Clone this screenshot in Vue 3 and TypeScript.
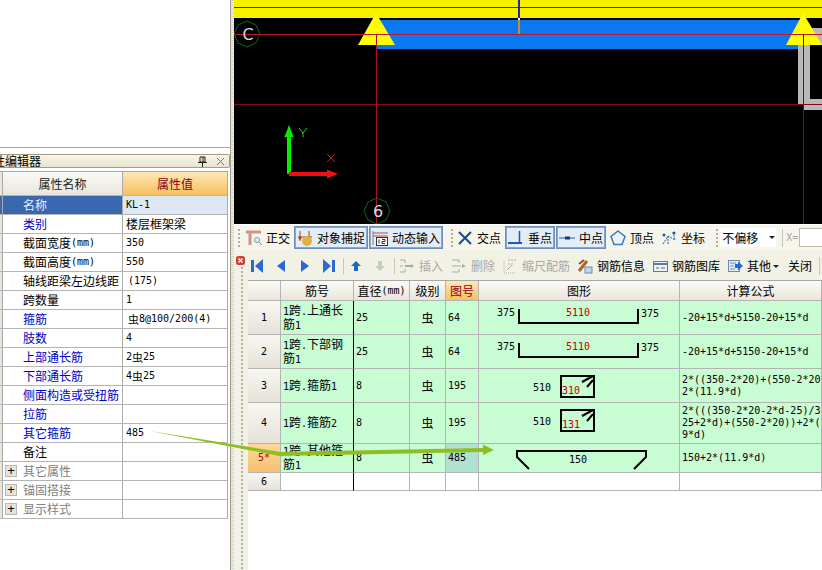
<script setup lang="ts">
interface Run { t: string; latin: boolean }
const runs = (s: string): Run[] =>
  (s.match(/[\x00-\x7f]+|[^\x00-\x7f]+/g) ?? []).map((t) => ({ t, latin: t.charCodeAt(0) < 128 }))

const props = [
  { name: '名称', value: 'KL-1', tone: 'sel', inset: false },
  { name: '类别', value: '楼层框架梁', tone: 'blue', inset: false },
  { name: '截面宽度(mm)', value: '350', tone: '', inset: false },
  { name: '截面高度(mm)', value: '550', tone: '', inset: false },
  { name: '轴线距梁左边线距', value: '(175)', tone: '', inset: true },
  { name: '跨数量', value: '1', tone: '', inset: false },
  { name: '箍筋', value: '虫8@100/200(4)', tone: 'blue', inset: true },
  { name: '肢数', value: '4', tone: 'blue', inset: false },
  { name: '上部通长筋', value: '2虫25', tone: 'blue', inset: false },
  { name: '下部通长筋', value: '4虫25', tone: 'blue', inset: false },
  { name: '侧面构造或受扭筋', value: '', tone: 'blue', inset: false },
  { name: '拉筋', value: '', tone: 'blue', inset: false },
  { name: '其它箍筋', value: '485', tone: 'blue', inset: false },
  { name: '备注', value: '', tone: '', inset: false },
  { name: '其它属性', value: '', tone: 'group', inset: false },
  { name: '锚固搭接', value: '', tone: 'group', inset: false },
  { name: '显示样式', value: '', tone: 'group', inset: false },
]

const icons: Record<string, string> = {
  ortho: '<path d="M0 2h15M4 2v13" stroke="#d09488" stroke-width="3" fill="none"/><circle cx="11" cy="10" r="2.500" fill="#e8f0f4" stroke="#7a9ab0"/><path d="M13 12l3 3" stroke="#7a9ab0"/>',
  snap: '<path d="M3 1v10M12 1v10M1 7h14" stroke="#8a4a30" fill="none"/><circle cx="10" cy="11" r="5" fill="#e0b040"/><circle cx="3" cy="8" r="1.500" fill="#c03020"/>',
  dyn: '<path d="M1 3h15M1 6h15" stroke="#b05040"/><path d="M1 1v14" stroke="#708090"/><rect x="4.500" y="7.500" width="11" height="8" fill="#fff" stroke="#333"/><path d="M7 9.500v4M10 9.500h3v2h-3v2h3" stroke="#333" fill="none"/>',
  cross: '<path d="M2 2l12 12M14 2L2 14" stroke="#1a4a80" stroke-width="2"/>',
  perp: '<path d="M11.500 1v12" stroke="#1a5ab0" stroke-width="1.500"/><path d="M-2 13h16" stroke="#1a5ab0" stroke-width="2"/>',
  mid: '<path d="M0 8h16" stroke="#1a5ab0"/><rect x="6" y="6.500" width="5" height="3" fill="#123a80"/>',
  vertex: '<path d="M8 1l7 5.500-3 8H4l-3-8z" fill="#eaf2fa" stroke="#3a78c0" stroke-width="1.500"/>',
  coord: '<path d="M2 14l5-8 7 4-2-8M7 6v9" stroke="#1a5a90" fill="none" stroke-dasharray="2 1"/><circle cx="3" cy="5" r="1.500" fill="#1a5a90"/><circle cx="13" cy="3" r="1.500" fill="#1a5a90"/>',
  first: '<path d="M2 2h3v12H2z" fill="#2a6ad0"/><path d="M14 1L6 8l8 7z" fill="#2a6ad0"/>',
  prev: '<path d="M12 2L4 8l8 6z" fill="#2a6ad0"/>',
  next: '<path d="M4 2l8 6-8 6z" fill="#2a6ad0"/>',
  last: '<path d="M11 2h3v12h-3z" fill="#2a6ad0"/><path d="M2 1l8 7-8 7z" fill="#2a6ad0"/>',
  up: '<path d="M8 3l5 5h-3v5H6V8H3z" fill="#1a6ac0"/>',
  down: '<path d="M6 3h4v5h3l-5 5-5-5h3z" fill="#c8c8c4"/>',
  ins: '<path d="M1 2h5M1 8h3M1 14h5M6 2v3M6 11v3" stroke="#aaa" fill="none"/><path d="M6 8h8" stroke="#aaa" stroke-width="2"/><path d="M12 6l3 2-3 2z" fill="#aaa"/>',
  del: '<path d="M1 2h7v3M1 14h7v-3M1 8h9" stroke="#aaa" fill="none"/><path d="M11 6l4 2-4 2z" fill="#aaa"/>',
  scale: '<path d="M2 3v12h12" stroke="#b0b0b0" stroke-dasharray="1 1" fill="none"/><path d="M6 2h8M6 6h5" stroke="#b0b0b0" stroke-dasharray="2 1"/><path d="M5 12l5-5" stroke="#b0b0b0"/>',
  info: '<path d="M2 13L10 3" stroke="#a06a30" stroke-width="3"/><rect x="8" y="9" width="7" height="6" fill="#c0d4ea" stroke="#7088a8"/><path d="M2 6l5-4" stroke="#b04030" stroke-width="2"/>',
  lib: '<rect x="1.500" y="3.500" width="14" height="10" fill="#eaf0f8" stroke="#5a7aa8"/><path d="M2 6h13" stroke="#5a7aa8" stroke-width="2"/><path d="M4 10h3M9 10h4" stroke="#806040"/>',
  other: '<rect x="1.500" y="2.500" width="11" height="11" fill="#e4eef8" stroke="#6a8ab0"/><path d="M3 5h6M3 8h4M3 11h5" stroke="#7a8a9a"/><path d="M8 6h3V3.500L16 8l-5 4.500V10H8z" fill="#2a6ad0"/>',
}

const snapTools = [
  { label: '正交', icon: 'ortho', on: false },
  { label: '对象捕捉', icon: 'snap', on: true },
  { label: '动态输入', icon: 'dyn', on: true },
]
const pointTools = [
  { label: '交点', icon: 'cross', on: false },
  { label: '垂点', icon: 'perp', on: true },
  { label: '中点', icon: 'mid', on: true },
  { label: '顶点', icon: 'vertex', on: false },
  { label: '坐标', icon: 'coord', on: false },
]
const navIcons = ['first', 'prev', 'next', 'last']
const editTools = [
  { label: '缩尺配筋', icon: 'scale', off: true },
  { label: '钢筋信息', icon: 'info', off: false },
  { label: '钢筋图库', icon: 'lib', off: false },
  { label: '其他', icon: 'other', off: false },
]

const heads = ['', '筋号', '直径(mm)', '级别', '图号', '图形', '计算公式']
const rows = [
  { no: '1', name: '1跨.上通长筋1', dia: '25', code: '64', h: 34, top: 301, formula: ['-20+15*d+5150-20+15*d'] },
  { no: '2', name: '1跨.下部钢筋1', dia: '25', code: '64', h: 34, top: 335, formula: ['-20+15*d+5150-20+15*d'] },
  { no: '3', name: '1跨.箍筋1', dia: '8', code: '195', h: 34, top: 369, formula: ['2*((350-2*20)+(550-2*20))+', '2*(11.9*d)'] },
  { no: '4', name: '1跨.箍筋2', dia: '8', code: '195', h: 41, top: 403, formula: ['2*(((350-2*20-2*d-25)/3*', '25+2*d)+(550-2*20))+2*(1', '9*d)'] },
  { no: '5*', name: '1跨.其他箍筋1', dia: '8', code: '485', h: 29, top: 444, formula: ['150+2*(11.9*d)'] },
]
</script>

<template>
  <div class="page">
    <aside class="left">
      <div class="left-top"></div>
      <div class="title">
        <span class="title-text">属性编辑器</span>
        <svg class="pin" width="9" height="11" viewBox="0 0 9 11"><path d="M2 1h5v5H2zM0 6.500h9M4.500 7v4M5 1v5" stroke="#222" fill="none"/></svg>
        <svg class="title-x" width="9" height="9" viewBox="0 0 9 9"><path d="M1 1l7 7M8 1L1 8" stroke="#777" fill="none"/></svg>
      </div>
      <div class="pgrid">
        <div class="stub"></div>
        <div class="pcell phead">属性名称</div>
        <div class="pcell phead active">属性值</div>
        <template v-for="p in props" :key="p.name">
          <div class="stub" :class="{ stubsel: p.tone === 'sel' }"></div>
          <div class="pcell pname" :class="p.tone">
            <span v-if="p.tone === 'group'" class="plus">+</span>
            <span v-for="(r, i) in runs(p.name)" :key="i" :class="{ lat: r.latin }">{{ r.t }}</span>
          </div>
          <div class="pcell pval" :class="{ valsel: p.tone === 'sel', inset: p.inset }">
            <span v-for="(r, i) in runs(p.value)" :key="i" :class="{ lat: r.latin, rebar: !r.latin && r.t === '虫' }">{{ r.t }}</span>
          </div>
        </template>
      </div>
    </aside>
    <div class="splitter"></div>

    <main class="right">
      <svg class="canvas" width="588" height="224" viewBox="234 0 588 224">
        <rect x="234" y="0" width="588" height="224" fill="#000" />
        <rect x="234" y="0" width="588" height="18" fill="#f7f000" />
        <rect x="377" y="20" width="427" height="29" fill="#0a78f0" />
        <path d="M798 110V28H822V45H810V99H822V110H803V104H798Z" fill="#b8b8b8" />
        <rect x="518" y="0" width="2" height="18" fill="#2424b8" />
        <rect x="518" y="18" width="2" height="2" fill="#fff" />
        <rect x="518" y="20" width="2" height="14" fill="#d08a30" />
        <path d="M376 13L395 45H358Z" fill="#ffff00" />
        <path d="M803 13L822 45H786Z" fill="#ffff00" />
        <path d="M234 7.500H822" stroke="#8a1020" />
        <path d="M234 34.500H822" stroke="#c01828" />
        <path d="M234 104.500H822" stroke="#800818" />
        <path d="M376.500 34V224" stroke="#b01020" />
        <path d="M803.500 34V224" stroke="#800818" />
        <polygon points="247,21 256,25 260,34 256,43 247,47 238,43 234,34 238,25" fill="none" stroke="#0c6a18" />
        <text x="248" y="40" class="axis-label">C</text>
        <polygon points="377,198 386,202 390,211 386,220 377,224 368,220 364,211 368,202" fill="none" stroke="#0c6a18" />
        <text x="378" y="217" class="axis-label">6</text>
        <path d="M289 174V135" stroke="#00f000" stroke-width="4" />
        <path d="M289 125L293.500 137H284.500Z" fill="#00f000" />
        <path d="M289 174H330" stroke="#f01010" stroke-width="4" />
        <path d="M338 174L327 169.500V178.500Z" fill="#f01010" />
        <path d="M299 128L303 133L307 128M303 133V137" stroke="#30d040" fill="none" />
        <path d="M327 154L335 162M335 154L327 162" stroke="#c02020" fill="none" />
      </svg>

      <div class="bar1">
        <span class="grip g1"></span>
        <div v-for="t in snapTools" :key="t.label" class="tool" :class="{ on: t.on }">
          <svg width="16" height="16" viewBox="0 0 16 16" v-html="icons[t.icon]"></svg>
          <span>{{ t.label }}</span>
        </div>
        <span class="grip g2"></span>
        <div v-for="t in pointTools" :key="t.label" class="tool" :class="{ on: t.on }">
          <svg width="16" height="16" viewBox="0 0 16 16" v-html="icons[t.icon]"></svg>
          <span>{{ t.label }}</span>
        </div>
        <span class="grip g2"></span>
        <div class="select"><span>不偏移</span><i class="caret"></i></div>
        <span class="sep s1"></span>
        <span class="xlabel lat">X=</span>
        <div class="xinput"></div>
      </div>

      <div class="lower">
        <div class="gutter">
          <svg width="9" height="9" viewBox="0 0 9 9"><rect width="9" height="9" rx="2.500" fill="#d04030" /><path d="M2.500 2.500l4 4M6.500 2.500l-4 4" stroke="#fff" stroke-width="1.500" /></svg>
          <span class="grip g3"></span>
        </div>
        <div class="content">
          <div class="bar2">
            <div class="nav">
              <svg v-for="n in navIcons" :key="n" width="16" height="16" viewBox="0 0 16 16" v-html="icons[n]"></svg>
            </div>
            <span class="sep s2"></span>
            <div class="nav n2">
              <svg width="16" height="16" viewBox="0 0 16 16" v-html="icons.up"></svg>
              <svg width="16" height="16" viewBox="0 0 16 16" v-html="icons.down"></svg>
            </div>
            <span class="sep s3"></span>
            <div class="tool2 off first"><svg width="16" height="16" viewBox="0 0 16 16" v-html="icons.ins"></svg><span>插入</span></div>
            <div class="tool2 off"><svg width="16" height="16" viewBox="0 0 16 16" v-html="icons.del"></svg><span>删除</span></div>
            <div v-for="t in editTools" :key="t.label" class="tool2 narrow" :class="{ off: t.off }">
              <svg width="16" height="16" viewBox="0 0 16 16" v-html="icons[t.icon]"></svg><span>{{ t.label }}</span>
            </div>
            <i class="caret c2"></i>
            <span class="close">关闭</span>
            <span class="sep s4"></span>
          </div>

          <div class="table">
            <div class="trow thead">
              <div v-for="(h, i) in heads" :key="i" class="tc th" :class="{ active: i === 4 }">
                <span v-for="(r, j) in runs(h)" :key="j" :class="{ lat: r.latin }">{{ r.t }}</span>
              </div>
            </div>
            <div v-for="row in rows" :key="row.no" class="trow data" :style="{ height: row.h + 'px' }">
              <div class="tc rowno" :class="{ active: row.no === '5*' }"><span class="lat" :class="{ red: row.no === '5*' }">{{ row.no }}</span></div>
              <div class="tc name"><div>
                <span v-for="(r, j) in runs(row.name)" :key="j" :class="{ lat: r.latin }">{{ r.t }}</span>
              </div></div>
              <div class="tc"><span class="lat">{{ row.dia }}</span></div>
              <div class="tc center"><span>虫</span></div>
              <div class="tc" :class="{ marked: row.code === '485' }"><span class="lat">{{ row.code }}</span></div>
              <div class="tc shape">
                <svg width="200" :height="row.h - 1" :viewBox="`479 ${row.top} 200 ${row.h - 1}`">
                  <template v-if="row.no === '1' || row.no === '2'">
                    <path :d="`M519 ${row.top + 8}V${row.top + 22}H638V${row.top + 8}`" class="bar" />
                    <text x="497" :y="row.top + 15" class="svgt">375</text>
                    <text x="578" :y="row.top + 15" class="svgt red mid">5110</text>
                    <text x="641" :y="row.top + 16" class="svgt">375</text>
                  </template>
                  <template v-else-if="row.no === '3' || row.no === '4'">
                    <path :d="`M561 ${row.top + 7}H594V${row.top + 28}H561Z`" class="bar" />
                    <path :d="`M582 ${row.top + 13}L593 ${row.top + 7}M587 ${row.top + 18}L593 ${row.top + 11}`" class="bar" />
                    <text x="533" :y="row.top + 22" class="svgt">510</text>
                    <text x="562" :y="row.top + 25" class="svgt red">{{ row.no === '3' ? '310' : '131' }}</text>
                  </template>
                  <template v-else>
                    <path d="M529 469L517 457V451H646V457L634 469" class="bar" />
                    <text x="578" y="463" class="svgt mid">150</text>
                  </template>
                </svg>
              </div>
              <div class="tc formula"><div>
                <div v-for="f in row.formula" :key="f" class="lat fline">{{ f }}</div>
              </div></div>
            </div>
            <div class="trow data blank">
              <div class="tc rowno"><span class="lat">6</span></div>
              <div class="tc name"></div>
              <div class="tc"></div>
              <div class="tc"></div>
              <div class="tc"></div>
              <div class="tc"></div>
              <div class="tc"></div>
            </div>
          </div>
        </div>
      </div>
    </main>

    <svg class="callout" width="822" height="570" viewBox="0 0 822 570">
      <path d="M150 431L284 452.500L282 456.500Z" fill="#8ebf1e" />
      <path d="M278 452L483 448V452L278 456Z" fill="#8ebf1e" />
      <path d="M483 444.500L494 450L483 455Z" fill="#8ebf1e" />
    </svg>
  </div>
</template>

<style scoped>
.page {
  position: relative;
  display: flex;
  width: 822px;
  height: 570px;
  overflow: hidden;
  background: #fff;
  color: #000;
  font-family: "Noto Sans CJK SC", "Liberation Sans", sans-serif;
  font-size: 12px;
  line-height: 12px;
}
.lat { font-family: "DejaVu Sans Mono", monospace; font-size: 10px; }
.rebar { font-size: 11px; }
.red { color: #a00020; }

.left { width: 231px; flex: none; box-sizing: border-box; border-right: 1px solid #9a9a90; overflow: hidden; }
.left-top { height: 147px; border-bottom: 1px solid #a8a8a0; margin-bottom: 6px; }
.title {
  display: flex; align-items: center; height: 14px; margin: 0 0 3px; box-sizing: border-box;
  border: 1px solid #a09c88; border-left: 0; border-radius: 0 2px 2px 0;
  background: linear-gradient(#f8f6ea, #e8e4d0);
  font-size: 12px; width: 230px;
}
.title-text { margin-left: -19px; }
.pin { margin-left: auto; margin-right: 9px; }
.title-x { margin-right: 4px; }

.pgrid {
  display: grid; grid-template-columns: 3px 120px 105px; grid-auto-rows: 19px;
  grid-template-rows: 24px; width: 228px; border-top: 1px solid #a8a8a8;
}
.stub { background: #e8e6da; border-right: 1px solid #a8a8a8; border-bottom: 1px solid #b8b8b8; box-sizing: border-box; }
.stubsel { background: #3a68ae; }
.pcell {
  display: flex; align-items: center; box-sizing: border-box; overflow: hidden; white-space: nowrap;
  border-right: 1px solid #aaa; border-bottom: 1px solid #b4b4b4;
}
.phead { justify-content: center; background: linear-gradient(#fafaf6, #e8e6dc); color: #222; }
.phead.active { background: linear-gradient(#fde8b8, #f6c060); color: #8a0020; }
.pname { padding-left: 20px; }
.pname.sel { background: #3a68ae; color: #e8f0fa; }
.pname.blue { color: #0000c0; }
.pname.group { color: #808080; padding-left: 2px; }
.pval { padding-left: 3px; }
.pval.inset { padding-left: 5px; }
.valsel { background: #dce8f6; }
.plus {
  width: 12px; height: 12px; margin-right: 6px; box-sizing: border-box; border: 1px solid #b8b8b0;
  background: #e4e4dc; color: #000; text-align: center; line-height: 9px; font-size: 13px;
  font-family: "Liberation Sans", sans-serif;
}

.splitter {
  width: 3px; flex: none;
  background: repeating-linear-gradient(#d8d4c0 0 1px, #f4f2e8 1px 2px);
}
.right { width: 588px; flex: none; display: flex; flex-direction: column; background: #f2f1e6; }
.canvas { display: block; flex: none; }
.axis-label { fill: #d8d8d8; font: 16px "DejaVu Sans", sans-serif; text-anchor: middle; }

.bar1 {
  display: flex; align-items: center; gap: 1px; height: 26px; flex: none; padding-left: 4px;
  background: #f6f5ec; margin-bottom: 2px; overflow: hidden; box-sizing: border-box;
  border-top: 1px solid #fff;
}
.grip { width: 2px; flex: none; background: repeating-linear-gradient(#b4b0a0 0 2px, transparent 2px 4px); }
.g1 { height: 18px; margin-right: 2px; }
.g2 { height: 18px; margin-left: 7px; }
.tool {
  display: flex; align-items: center; gap: 4px; flex: none; height: 23px;
  padding: 0 2px; box-sizing: border-box; border: 1px solid transparent;
}
.tool.on { border: 1px solid #6a8ec0; background: #e4ecf6; box-shadow: inset 0 0 0 1px #88a6d0; }
.select {
  display: flex; align-items: center; width: 56px; height: 19px; margin-left: 1px; padding-left: 2px;
  box-sizing: border-box; background: #fff; flex: none;
}
.caret { display: block; margin-left: auto; margin-right: 1px; width: 0; height: 0; border: 3px solid transparent; border-top: 3px solid #222; border-bottom: 0; }
.sep { width: 1px; flex: none; background: #c8c6b8; }
.s1 { height: 18px; margin-left: 5px; }
.xlabel { margin-left: 2px; color: #a8a8a0; width: 13px; }
.xinput { width: 30px; height: 19px; flex: none; background: #fff; border: 1px solid #c0bca8; box-sizing: border-box; }

.lower { flex: 1; display: flex; min-height: 0; }
.gutter { width: 14px; flex: none; display: flex; flex-direction: column; align-items: flex-start; padding: 4px 0 0 2px; box-sizing: border-box; gap: 2px; }
.g3 { flex: 1; margin-left: 5px; }
.content { width: 574px; display: flex; flex-direction: column; min-height: 0; }

.bar2 { display: flex; align-items: center; height: 28px; flex: none; padding-left: 1px; background: #f2f1e6; }
.nav { display: flex; gap: 8px; flex: none; }
.n2 { margin-left: 4px; }
.s2 { height: 16px; margin-left: 6px; }
.s3 { height: 16px; margin-left: 6px; }
.tool2 { display: flex; align-items: center; gap: 4px; flex: none; margin-left: 8px; }
.tool2.first { margin-left: 4px; }
.tool2.narrow { margin-left: 7px; }
.tool2.off { color: #a8a8a8; }
.c2 { margin-left: 2px; margin-right: 0; }
.close { margin-left: 9px; flex: none; }
.s4 { height: 18px; margin-left: 7px; }

.table { flex: 1; background: #fff; border-top: 1px solid #a8a8a8; min-height: 0; }
.trow { display: grid; grid-template-columns: 33px 73px 56px 36px 33px 201px 142px; }
.thead { height: 20px; }
.blank { height: 18px; }
.tc {
  display: flex; align-items: center; box-sizing: border-box; padding-left: 2px; overflow: hidden;
  border-right: 1px solid #b4b4b4; border-bottom: 1px solid #b4b4b4;
}
.data .tc { background: #c8fcd2; }
.blank .tc { background: #fff; }
.th { justify-content: center; padding: 0; background: linear-gradient(#fbfaf6, #e8e6dc); font-size: 12px; white-space: nowrap; }
.th.active { background: linear-gradient(#fde8b8, #f6c060); color: #8a0020; }
.data .rowno { justify-content: center; padding: 0; background: linear-gradient(#f8f7f2, #e4e2d8); }
.data .rowno.active { background: linear-gradient(#fdd898, #f6c070); }
.name { border-right-color: #000; }
.center { justify-content: center; padding: 0; }
.data .marked { background: #b0e2d4; }
.shape { padding: 0; }
.shape svg { display: block; }
.bar { fill: none; stroke: #000; stroke-width: 2; }
.svgt { font: 10px "DejaVu Sans Mono", monospace; fill: #000; }
.svgt.red { fill: #c00000; }
.svgt.mid { text-anchor: middle; }
.fline { white-space: nowrap; line-height: 12px; }

.callout { position: absolute; left: 0; top: 0; pointer-events: none; }
</style>

<style>
html, body { margin: 0; padding: 0; background: #fff; }
</style>
